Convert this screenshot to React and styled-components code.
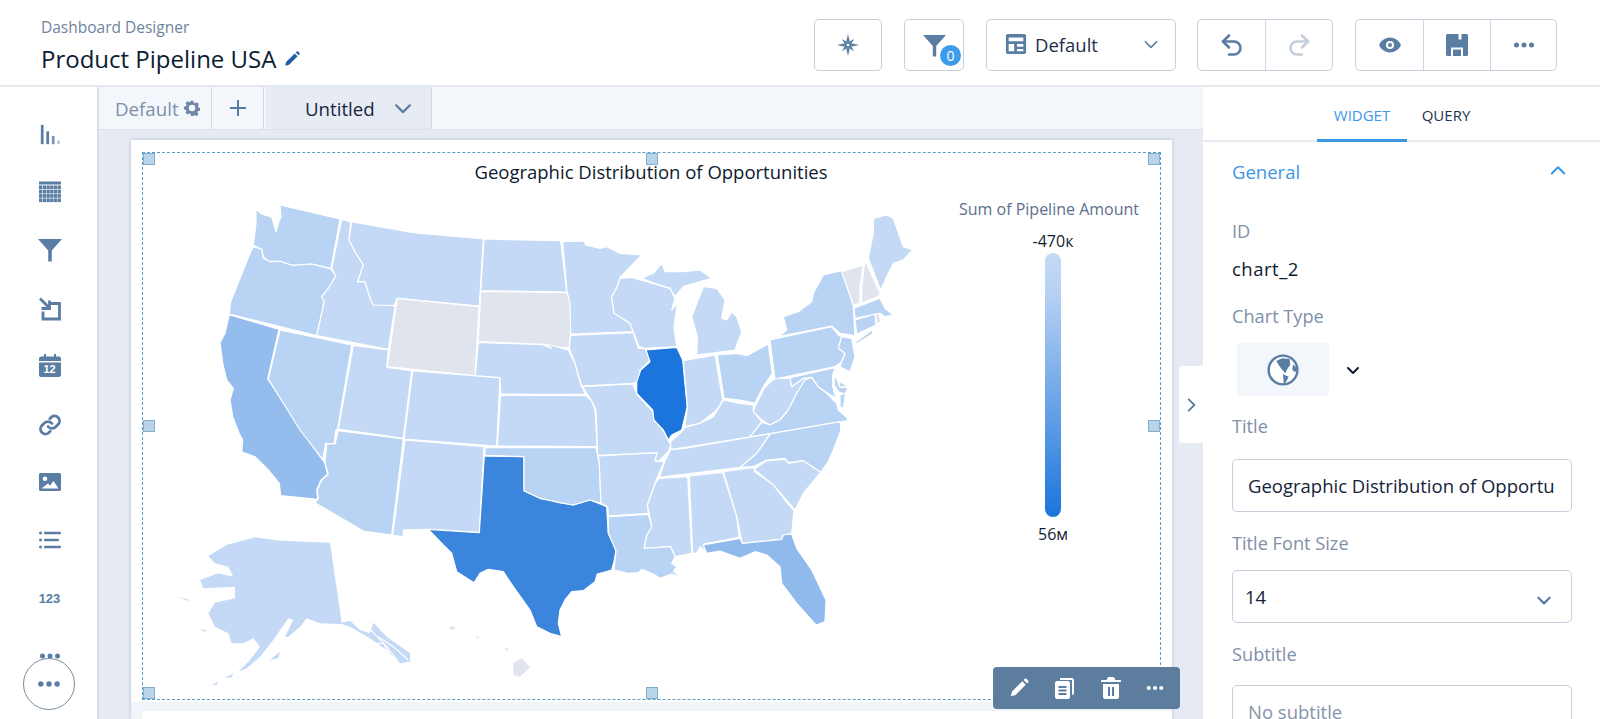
import React from "react";
import styled, { createGlobalStyle } from "styled-components";

const FONT = `"Open Sans", "Noto Sans", "Liberation Sans", sans-serif`;
const ICON = "#5a7da3";

const Global = createGlobalStyle`
  html, body { margin: 0; padding: 0; height: 719px; overflow: hidden; background: #fff; }
  body { font-family: ${FONT}; color: #16325c; }
  * { box-sizing: border-box; }
`;

const ORIGINS = { a: [200, 190], b: [540, 190], c: [160, 430], d: [540, 420] };
const toPoints = (s) => {
  let o = [0, 0];
  return s
    .trim()
    .split(/\s+/)
    .reduce((acc, tok) => {
      if (ORIGINS[tok]) { o = ORIGINS[tok]; return acc; }
      const [x, y] = tok.split(",").map(Number);
      acc.push(`${(o[0] + x / 3).toFixed(1)},${(o[1] + y / 3).toFixed(1)}`);
      return acc;
    }, [])
    .join(" ");
};

const C = { base: "#c3d9f6", mid: "#b8d3f3", ca: "#94bced", fl: "#90b9ec", tx: "#3b86dc", il: "#1b75dc", none: "#e0e4ec" };

const STATES = [
  [C.mid, "a 168,58 185,72 215,82 228,125 235,100 243,80 240,45 420,87 393,235 335,222 275,226 240,214 205,214 190,200 185,178 160,165 162,150 168,100"],
  [C.mid, "a 160,170 185,178 190,205 210,215 240,214 275,226 335,222 393,237 407,258 385,295 365,320 373,335 350,437 88,372 92,335 118,270 150,190"],
  [C.base, "a 425,88 452,95 447,150 465,185 490,225 473,275 495,275 512,330 520,345 575,342 585,350 565,478 350,437 373,335 365,320 385,295 407,258 395,235"],
  [C.base, "a 455,95 640,128 850,147 838,348 592,325 582,347 520,345 512,330 495,275 473,275 490,225 465,185 447,150"],
  [C.none, "a 592,325 837,350 825,557 562,530"],
  [C.base, "a 852,147 1082,152 1100,306 842,302"],
  [C.none, "a 842,304 1100,308 b 92,340 92,430 88,472 58,474 0,463 a 835,455"],
  [C.ca, "a 88,374 237,418 203,567 345,778 c 495,100 503,133 483,150 470,180 473,208 362,197 358,160 325,120 285,80 245,65 248,30 232,0 a 125,750 98,680 90,630 100,595 80,570 68,520 60,458 75,430"],
  [C.mid, "a 240,420 455,465 413,716 c 527,2 522,42 497,40 488,88 420,0 a 205,567"],
  [C.base, "a 460,466 565,480 560,532 635,542 610,745 415,717"],
  [C.base, "a 638,543 900,563 890,768 612,747"],
  [C.mid, "c 535,2 730,27 695,315 610,303 465,218 475,205 472,180 485,150 505,133 495,100 500,42 525,42"],
  [C.base, "c 735,30 972,50 958,308 805,298 730,300 730,320 698,316"],
  [C.tx, "c 973,78 1092,80 1092,182 d 0,235 30,240 60,248 100,255 150,240 175,250 200,260 205,340 218,365 228,392 222,425 215,450 172,462 165,485 130,512 95,515 75,540 60,570 55,610 65,650 30,640 0,625 c 1130,590 1110,540 1060,470 1030,425 985,418 960,430 942,458 890,425 875,370 850,345 805,298 958,308"],
  [C.mid, "c 975,53 d 168,83 178,130 183,250 150,240 100,255 60,248 0,235 c 1092,182 1092,80 975,76"],
  [C.base, "a 902,616 b 138,617 155,632 165,660 172,770 a 892,768"],
  [C.base, "a 835,457 1040,465 1055,475 b 0,462 30,465 60,473 85,480 105,520 120,575 135,612 0,613 a 902,612 900,563 826,557"],
  [C.base, "b 92,436 280,428 295,475 315,475 330,510 300,540 300,570 280,580 125,588 105,520 88,475"],
  [C.base, "b 68,155 133,153 137,165 180,175 200,170 240,190 305,195 240,262 232,290 215,320 222,370 270,400 280,425 92,432 90,340 80,300"],
  [C.base, "b 240,265 275,262 310,272 390,295 405,325 395,360 412,340 402,410 410,470 315,475 297,470 280,425 270,400 222,370 215,320 232,290"],
  [C.base, "b 305,265 340,250 365,220 375,245 430,245 480,240 515,265 430,290 405,320 390,295 340,278"],
  [C.base, "b 455,380 490,290 530,295 555,330 545,385 560,390 575,365 590,380 605,425 585,480 470,495 472,440"],
  [C.il, "b 318,480 410,472 428,510 442,650 430,700 425,720 395,735 385,750 370,720 340,690 338,660 290,610 290,575 302,540 330,515"],
  [C.base, "b 430,512 525,495 548,630 530,660 505,680 480,700 435,710 442,650"],
  [C.mid, "b 532,495 590,490 620,497 685,462 697,550 670,590 645,640 600,630 552,625"],
  [C.base, "b 435,712 480,700 520,680 550,630 600,640 640,645 640,665 665,695 630,741 392,779 392,755 425,725"],
  [C.base, "b 645,650 672,595 697,570 710,565 750,565 755,590 790,565 800,570 770,610 745,660 720,690 690,705 665,690 640,665"],
  [C.mid, "b 630,741 665,697 690,705 720,690 745,660 770,610 795,570 815,562 835,590 860,610 890,640 895,660 918,680 925,692"],
  [C.mid, "b 690,450 875,410 895,435 905,440 895,475 915,490 905,515 885,530 705,567"],
  [C.mid, "b 715,440 740,420 730,380 775,365 815,335 820,310 850,255 905,242 940,345 945,440 935,435 900,430 875,408"],
  [C.mid, "b 945,458 995,420 1000,430 950,462"],
  [C.mid, "b 905,440 935,445 945,500 930,545 900,530 915,490 895,475"],
  [C.mid, "b 750,563 885,533 878,555 878,590 888,625 860,608 835,590 815,562 790,565 755,590"],
  [C.mid, "b 887,535 900,575 925,590 900,592"],
  [C.mid, "b 883,550 900,592 925,592 915,612 895,605 883,585"],
  [C.mid, "b 900,615 917,610 910,655 900,650"],
  [C.none, "b 905,245 970,225 960,290 960,340 940,345"],
  [C.none, "b 975,210 1022,315 965,340 965,290"],
  [C.base, "b 985,205 1000,130 1000,85 1040,75 1060,85 1090,170 1118,180 1090,210 1060,220 1040,260 1022,300"],
  [C.mid, "b 942,355 1020,325 1035,355 1060,375 1035,380 1020,370 945,385"],
  [C.mid, "b 945,390 1005,372 1008,405 950,432"],
  [C.none, "b 1005,372 1018,370 1022,395 1010,403"],
  [C.mid, "d 692,41 900,5 903,30 880,90 865,125 842,157 790,122 745,128 735,115 680,120 640,140 600,142 650,100"],
  [C.base, "d 642,148 680,122 735,118 745,130 790,122 842,157 790,220 765,270 735,235 700,195"],
  [C.base, "d 550,155 640,142 645,155 700,195 735,240 762,272 755,340 730,345 725,358 607,370 590,290"],
  [C.base, "d 448,168 548,157 590,290 598,352 490,372 498,395 480,380 470,400 458,400"],
  [C.base, "d 358,175 443,170 455,400 405,410 392,380 312,385 320,345 335,320 322,255 345,190"],
  [C.base, "d 392,89 435,85 690,41 650,100 600,142 358,172 375,122"],
  [C.base, "d 175,108 352,98 345,122 372,125 345,190 322,255 325,280 205,288 203,260 183,250 178,130"],
  [C.mid, "d 205,290 325,283 335,320 320,345 312,385 392,380 405,410 395,430 410,440 400,455 430,470 395,462 360,475 340,462 305,448 295,458 265,460 222,450 228,392 205,340"],
  [C.base, "b 128,590 278,582 290,612 320,645 338,665 342,690 370,722 392,765 d 385,95 358,122 345,122 352,98 173,106 b 168,660 155,632"],
  [C.fl, "d 490,375 600,355 607,370 725,358 730,345 755,342 770,385 815,450 858,540 855,605 828,615 770,550 725,490 720,440 680,405 645,395 600,415 540,393 500,400"],
];

const ISLANDS = [
  [C.base, "c 145,378 200,345 285,322 360,332 510,338 545,578 570,572 600,600 630,610 640,578 680,620 750,670 750,695 720,700 680,660 630,625 570,590 545,582 480,580 440,565 420,590 385,620 375,620 400,570 385,565 340,630 300,680 260,715 235,725 270,690 300,650 280,625 250,640 215,640 205,610 165,590 145,550 165,518 225,505 225,470 130,475 120,450 175,430 220,440 205,410 165,400"],
  [C.base, "c 155,765 175,755 170,765"],
  [C.base, "c 195,745 220,730 215,742"],
  [C.base, "c 330,690 360,665 355,685"],
  [C.base, "c 120,597 140,600 135,605"],
  [C.base, "c 55,500 88,510 80,512"],
  [C.none, "c 1060,700 1085,685 1110,712 1080,740 1060,735"],
  [C.none, "c 868,590 885,590 883,600 870,598"],
  [C.none, "c 945,618 958,620 955,627"],
  [C.none, "c 1030,652 1050,658 1040,662"],
];
const CUTS = ["c 632,600 680,650 715,695", "c 655,620 700,650 745,690", "c 640,640 670,640 690,672"];

const USMap = () => (
  <MapSvg viewBox="131 140 1041 579">
    {ISLANDS.map(([f, p], i) => <polygon key={i} fill={f} points={toPoints(p)} />)}
    {CUTS.map((p, i) => <polyline key={i} fill="none" stroke="#fff" strokeWidth="1.200" points={toPoints(p)} />)}
    {STATES.map(([f, p], i) => (
      <polygon key={i} fill={f} stroke="#fff" strokeWidth="1.200" strokeLinejoin="round" points={toPoints(p)} />
    ))}
  </MapSvg>
);

/* ---------- icons ---------- */
const Ico = ({ s = 24, vb = "0 0 24 24", c = ICON, children }) => (
  <svg width={s} height={s} viewBox={vb} fill={c}>{children}</svg>
);
const Pencil = ({ s = 18, c = "#1f5fa8" }) => (
  <Ico s={s} c={c}><path d="M3 21l1.400-5.200L15.600 4.600l3.800 3.800L8.200 19.600zM17 3.200l1.300-1.200c.5-.5 1.300-.5 1.800 0l2 2c.5.5.5 1.300 0 1.800L20.800 7z" /></Ico>
);
const Compass = () => (
  <Ico s={22}>
    {[0, 90, 180, 270].map((r) => <path key={r} d="M12 0l2 8.500h-4z" transform={`rotate(${r} 12 12)`} />)}
    {[45, 135, 225, 315].map((r) => <path key={r} d="M12 2.800l1.700 5.700h-3.400z" transform={`rotate(${r} 12 12)`} />)}
    <circle cx="12" cy="12" r="3.600" /><circle cx="12" cy="12" r="1.500" fill="#fff" />
  </Ico>
);
const Funnel = ({ s = 23 }) => (
  <Ico s={s} vb="0 0 23 23"><path d="M0 1h23L13.200 12v10.500h-3.400V12z" /></Ico>
);
const LayoutIcon = () => (
  <Ico s={22}><path fillRule="evenodd" d="M3 1h18c1 0 2 1 2 2v18c0 1-1 2-2 2H3c-1 0-2-1-2-2V3c0-1 1-2 2-2zm1 4v4h16V5zm0 7v8h6v-8zm9 0v3h7v-3zm0 5.500V20h7v-2.500z" /></Ico>
);
const Chev = ({ dir = "down", s = 16, c = ICON, w = 2 }) => {
  const d = { down: "M3 6l5 5 5-5", up: "M3 10l5-5 5 5", right: "M6 3l5 5-5 5" }[dir];
  return <svg width={s} height={s} viewBox="0 0 16 16" fill="none" stroke={c} strokeWidth={w} strokeLinecap="round" strokeLinejoin="round"><path d={d} /></svg>;
};
const Undo = ({ c = ICON, flip }) => (
  <svg width="24" height="24" viewBox="0 0 24 24" fill="none" stroke={c} strokeWidth="2.600" strokeLinecap="round" strokeLinejoin="round" style={flip ? { transform: "scaleX(-1)" } : undefined}>
    <path d="M9 2.500L3 8.500l6 6" /><path d="M3 8.500h11a6.500 6.500 0 0 1 0 13H9" />
  </svg>
);
const Eye = () => (
  <Ico s={24}><path fillRule="evenodd" d="M12 4.500c5.500 0 9.500 4 11 7.500-1.500 3.500-5.500 7.500-11 7.500S2.500 15.500 1 12c1.500-3.500 5.500-7.500 11-7.500zm0 3.500a4 4 0 1 0 0 8 4 4 0 0 0 0-8zm0 2a2 2 0 1 1 0 4 2 2 0 0 1 0-4z" /></Ico>
);
const Save = () => (
  <Ico s={24}><path fillRule="evenodd" d="M2.500 1h19C22.300 1 23 1.700 23 2.500v19c0 .8-.7 1.500-1.500 1.500h-3.500v-8.500H6V23H2.500C1.700 23 1 22.300 1 21.500v-19C1 1.700 1.700 1 2.500 1zM13.500 1v5.500h3V1zM8 16.500h8V23H8z" /></Ico>
);
const Dots = ({ c = ICON, s = 24 }) => (
  <Ico s={s} c={c}><circle cx="4.500" cy="12" r="2.500" /><circle cx="12" cy="12" r="2.500" /><circle cx="19.500" cy="12" r="2.500" /></Ico>
);
const Gear = () => (
  <Ico s={16} c="#6f86a5"><path fillRule="evenodd" d="M10 1h4l.6 3 2.200 1 2.700-1.600 2.800 2.800L20.700 9l1 2.300 2.300.7v4l-3 .6-.9 2.100 1.600 2.700-2.800 2.800-2.700-1.600-2.200.9L13.500 24h-3l-.6-3-2.200-.900-2.700 1.600-2.800-2.800L3.800 17l-.9-2.100L0 14v-4l3-.6.9-2.200L2.300 4.500l2.800-2.800L7.800 3.300 10 2.400zm2 6a5 5 0 1 0 0 10 5 5 0 0 0 0-10z" /></Ico>
);
const BarsIcon = () => (
  <Ico s={22}><rect x="2" y="1" width="3" height="21" /><rect x="8" y="8" width="3" height="14" /><rect x="14" y="13" width="3" height="9" opacity=".8" /><rect x="20" y="18" width="2.500" height="4" opacity=".5" /></Ico>
);
const TableIcon = () => (
  <Ico s={24}>
    <rect x="1" y="1.500" width="22" height="3" />
    {[5.500, 9.800, 14.100, 18.400].map((y) =>
      [1, 4.800, 8.500, 12.200, 15.900, 19.600].map((x) => <rect key={`${x}-${y}`} x={x} y={y} width="3.300" height="3.700" />)
    )}
  </Ico>
);
const ImportIcon = () => (
  <svg width="24" height="24" viewBox="0 0 24 24" fill="none" stroke={ICON} strokeWidth="2.800">
    <path d="M12 6.500h9.500v15.500H5v-7.500" />
    <path d="M2 1.500l9 9" /><path d="M3.500 11.500h8v-8" />
  </svg>
);
const CalIcon = () => (
  <Ico s={24}><path fillRule="evenodd" d="M6 0h2v2.500h8V0h2v2.500h3c1 0 2 1 2 2V7H1V4.500c0-1 1-2 2-2h3zM1 8.500h22V21c0 1-1 2-2 2H3c-1 0-2-1-2-2z" /></Ico>
);
const LinkIcon = () => (
  <svg width="24" height="24" viewBox="0 0 24 24" fill="none" stroke={ICON} strokeWidth="2.800" strokeLinecap="round">
    <path d="M10 13.500a5 5 0 0 0 7.500.5l3-3a5 5 0 0 0-7-7l-1.700 1.700" />
    <path d="M14 10.500a5 5 0 0 0-7.500-.5l-3 3a5 5 0 0 0 7 7l1.700-1.700" />
  </svg>
);
const ImageIcon = () => (
  <Ico s={24}><path fillRule="evenodd" d="M2.500 3h19c.8 0 1.500.7 1.500 1.500v15c0 .8-.7 1.500-1.500 1.500h-19C1.700 21 1 20.300 1 19.500v-15C1 3.700 1.700 3 2.500 3zM7 6.500a2.300 2.300 0 1 0 0 4.600 2.300 2.300 0 0 0 0-4.600zM3.500 18.500h17l-5-7.500-3.500 4.500-2-2z" /></Ico>
);
const ListIcon = () => (
  <Ico s={24}><circle cx="2.500" cy="5" r="1.500" /><circle cx="2.500" cy="12" r="1.500" /><circle cx="2.500" cy="19" r="1.500" /><rect x="6" y="3.800" width="17" height="2.400" rx="1" /><rect x="6" y="10.800" width="15" height="2.400" rx="1" /><rect x="6" y="17.800" width="17" height="2.400" rx="1" /></Ico>
);
const Globe = () => (
  <svg width="32" height="32" viewBox="0 0 32 32">
    <circle cx="16" cy="16" r="14.400" fill="#fff" stroke={ICON} strokeWidth="2.400" />
    <path fill={ICON} d="M9.300 7L15 4.300 22.700 5 23.300 11 20.700 14.300 18.300 19.300 14 14.300 11.700 11zM16 20.300L21.700 22.700 18.300 29.300 16.700 29.300zM26 10.300L30 14.300 28.300 18.300 25.300 16z" />
  </svg>
);
const CopyIcon = () => (
  <Ico s={24} c="#fff"><path fillRule="evenodd" d="M8 2h12c1 0 2 1 2 2v13c0 1-1 2-2 2V4H8c0-1 0-2 0-2z" /><path fillRule="evenodd" d="M5 5h11c1 0 2 1 2 2v14c0 1-1 2-2 2H5c-1 0-2-1-2-2V7c0-1 1-2 2-2zm1.500 5v2h8v-2zm0 3.500v2h8v-2zm0 3.500v2h8v-2z" /></Ico>
);
const TrashIcon = () => (
  <Ico s={24} c="#fff"><path fillRule="evenodd" d="M10 1h4c1 0 2 1 2 2v1h5c.6 0 1 .4 1 1v1H2V5c0-.6.4-1 1-1h5V3c0-1 1-2 2-2zM4 8h16v13c0 1-1 2-2 2H6c-1 0-2-1-2-2zm5 3v9h2v-9zm4 0v9h2v-9z" /></Ico>
);

/* ---------- layout ---------- */
const Page = styled.div`
  width: 1600px; height: 719px; display: flex; flex-direction: column; overflow: hidden; position: relative;
`;
const Header = styled.header`
  height: 87px; flex: none; display: flex; align-items: flex-start; justify-content: space-between;
  border-bottom: 2px solid #e4e9f0; background: #fff;
`;
const Titles = styled.div`padding: 17px 0 0 41px;`;
const Crumb = styled.div`font-size: 15.500px; line-height: 20px; color: #6f83a0;`;
const TitleRow = styled.div`display: flex; align-items: center; gap: 7px; margin-top: 6px;`;
const PageTitle = styled.h1`margin: 0; font-weight: 400; font-size: 24px; line-height: 32px; color: #0c1c33;`;
const Actions = styled.div`display: flex; align-items: center; padding: 19px 43px 0 0;`;
const Group = styled.div`
  display: flex; height: 52px; margin-left: ${(p) => p.$gap ?? 22}px; border: 1px solid #c6d0dd; border-radius: 5px; background: #fff;
`;
const ActionBtn = styled.div`
  width: ${(p) => p.$w}px; display: flex; align-items: center; justify-content: center; position: relative;
  & + & { border-left: 1px solid #d0d7e2; }
`;
const Badge = styled.span`
  position: absolute; right: 2px; bottom: 4px; width: 21px; height: 21px; border-radius: 50%;
  background: #3d9be9; color: #fff; font-size: 14px; line-height: 21px; text-align: center;
`;
const LayoutSelect = styled.div`
  width: 188px; display: flex; align-items: center; padding: 0 15px 2px 18px; gap: 8px; font-size: 18.500px; color: #1d2f4c;
  & > span { flex: 1; }
`;
const Body = styled.div`flex: 1; display: flex; min-height: 0;`;
const Rail = styled.nav`
  width: 99px; flex: none; border-right: 2px solid #d8deea; background: #fff; position: relative;
  display: flex; flex-direction: column; align-items: center; padding: 35px 0 0 2px;
`;
const RailItem = styled.div`
  height: 58px; width: 100%; display: flex; justify-content: center; align-items: flex-start; color: ${ICON};
  position: relative; top: ${(p) => p.$dy ?? 0}px;
`;
const Digits = styled.span`font-family: "Liberation Sans", sans-serif; font-weight: 700; font-size: 13px; line-height: 22px; color: ${ICON};`;
const CalDigits = styled.span`
  position: absolute; top: 9px; left: 0; right: 0; text-align: center; font-family: "Liberation Sans", sans-serif;
  font-weight: 700; font-size: 11px; line-height: 13px; color: #fff;
`;
const MoreCircle = styled.div`
  position: absolute; left: 23px; top: 571px; width: 52px; height: 52px; border-radius: 50%;
  background: #fff; border: 1.500px solid #7b8ca5; display: flex; align-items: center; justify-content: center;
`;
const Canvas = styled.main`
  width: 1104px; flex: none; background: #e6ebf3; display: flex; flex-direction: column; position: relative; overflow: hidden;
`;
const TabBar = styled.div`
  height: 43px; flex: none; background: #f3f6fb; display: flex; border-bottom: 1px solid #dde3ec;
`;
const Tab = styled.div`
  display: flex; align-items: center; justify-content: ${(p) => (p.$pl != null ? "flex-start" : "center")};
  padding-left: ${(p) => p.$pl ?? 0}px; gap: ${(p) => p.$gap ?? 0}px;
  width: ${(p) => p.$w}px; background: ${(p) => (p.$active ? "#e7ecf4" : "#f3f6fb")};
  border-right: 1px solid #cfd7e3; font-size: 18.700px; color: ${(p) => p.$c};
  margin-right: ${(p) => p.$mr ?? 0}px;
`;
const Sheet = styled.div`
  margin: 10px 0 0 32px; width: 1041px; flex: 1; background: #fff; position: relative;
  box-shadow: 0 0 4px rgba(84, 105, 141, .35);
`;
const NextWidget = styled.div`
  position: absolute; left: 0; right: 0; top: 562px; bottom: 0; background: #f1f4f8; padding: 9px 0 0 11px;
  &::after { content: ""; display: block; height: 20px; background: #fff; }
`;
const MapSvg = styled.svg`position: absolute; left: 0; top: 0; width: 1041px; height: 579px; display: block;`;
const Selection = styled.div`
  position: absolute; left: 11px; top: 12px; width: 1019px; height: 548px; border: 1.500px dashed #5a9cc8;
`;
const Handle = styled.span`
  position: absolute; width: 12px; height: 12px; background: #b9d4e8; border: 1px solid #7fb0d2;
  left: ${(p) => p.$x}; top: ${(p) => p.$y};
  transform: translate(${(p) => p.$tx}, ${(p) => p.$ty});
`;
const ChartTitle = styled.div`
  position: absolute; left: 0; right: 1px; top: 19px; text-align: center; font-size: 18.500px; line-height: 26px; color: #0d1a2e;
`;
const Legend = styled.div`
  position: absolute; left: 826px; top: 59px; width: 184px; display: flex; flex-direction: column; align-items: center;
`;
const LegendTitle = styled.div`font-size: 16px; line-height: 20px; color: #5d6f8a; white-space: nowrap;`;
const LegendVal = styled.div`font-size: 16px; line-height: 20px; color: #101c30; margin: 12px 0 2px 8px;`;
const LegendBar = styled.div`
  width: 16px; height: 264px; margin-left: 8px; border-radius: 8px; background: linear-gradient(#c5daf6, #b7d1f3 15%, #1b75dc);
`;
const LegendValEnd = styled(LegendVal)`margin: 7px 0 0 8px;`;
const WidgetBar = styled.div`
  position: absolute; left: 862px; top: 527px; width: 187px; height: 42px; border-radius: 4px; background: #5d7d9f;
  display: flex; align-items: center; justify-content: space-around; padding: 0 4px;
`;
const Collapse = styled.div`
  position: absolute; right: 0; top: 279px; width: 24px; height: 77px; background: #fff; border-radius: 3px 0 0 3px;
  display: flex; align-items: center; justify-content: center;
`;
const Panel = styled.aside`flex: 1; background: #fff; display: flex; flex-direction: column; min-width: 0;`;
const PanelTabs = styled.div`
  height: 55px; flex: none; border-bottom: 2px solid #e8ecf2; display: flex; justify-content: flex-start; padding-left: 114px;
`;
const PanelTab = styled.div`
  width: ${(p) => p.$w}px; text-align: center; font-size: 15px; font-weight: 500; line-height: 56px; height: 55px;
  color: ${(p) => (p.$active ? "#3b97e4" : "#20344f")};
  border-bottom: 3px solid ${(p) => (p.$active ? "#3b97e4" : "transparent")};
`;
const Form = styled.div`padding: 0 28px 0 29px; position: relative;`;
const Section = styled.div`
  height: 58px; display: flex; align-items: center; justify-content: space-between; font-size: 18.500px; color: #3b97e4; padding: 0 4px 0 0;
`;
const Label = styled.div`
  font-size: 18.200px; line-height: 24px; color: #7f90a8; margin-top: ${(p) => p.$mt ?? 0}px;
`;
const Value = styled.div`font-size: 18.500px; letter-spacing: .5px; line-height: 24px; color: #0e1a2c; margin-top: 14px;`;
const TypeRow = styled.div`display: flex; align-items: center; gap: 16px; margin: 15px 0 0 5px;`;
const TypeBox = styled.div`
  width: 92px; height: 53px; background: #f3f6fa; border-radius: 3px; display: flex; align-items: center; justify-content: center;
`;
const Input = styled.div`
  height: 53px; margin-top: ${(p) => p.$mt ?? 0}px; border: 1px solid #c6d0dd; border-radius: 5px; padding: 0 15px; font-size: 18.500px; line-height: 51px;
  color: ${(p) => p.$c ?? "#14233a"}; white-space: nowrap; overflow: hidden; position: relative;
`;
const SelectBox = styled(Input)`padding-left: 12px;`;
const SelectChev = styled.span`position: absolute; right: 18px; top: 20px; display: flex;`;

const RAIL = [<BarsIcon />, <TableIcon />, <Funnel s={24} />, <ImportIcon />, "cal", <LinkIcon />, <ImageIcon />, <ListIcon />, "123", "next"];
const RAIL_DY = [2, 0, 0, 1, 0, 1, 0, 0, 2, 0];

export default function App() {
  return (
    <Page>
      <Global />
      <Header>
        <Titles>
          <Crumb>Dashboard Designer</Crumb>
          <TitleRow><PageTitle>Product Pipeline USA</PageTitle><Pencil /></TitleRow>
        </Titles>
        <Actions>
          <Group $gap={0}><ActionBtn $w={66}><Compass /></ActionBtn></Group>
          <Group><ActionBtn $w={58}><Funnel /><Badge>0</Badge></ActionBtn></Group>
          <Group><LayoutSelect><LayoutIcon /><span>Default</span><Chev c={ICON} s={18} w={1.500} /></LayoutSelect></Group>
          <Group $gap={21}>
            <ActionBtn $w={67}><Undo /></ActionBtn>
            <ActionBtn $w={67}><Undo c="#c3ced9" flip /></ActionBtn>
          </Group>
          <Group>
            <ActionBtn $w={67}><Eye /></ActionBtn>
            <ActionBtn $w={67}><Save /></ActionBtn>
            <ActionBtn $w={66}><Dots /></ActionBtn>
          </Group>
        </Actions>
      </Header>
      <Body>
        <Rail>
          {RAIL.map((it, i) => (
            <RailItem key={i} $dy={RAIL_DY[i]}>
              {it === "123" ? <Digits>123</Digits>
                : it === "cal" ? <><CalIcon /><CalDigits>12</CalDigits></>
                : it === "next" ? <Dots />
                : it}
            </RailItem>
          ))}
          <MoreCircle><Dots s={26} /></MoreCircle>
        </Rail>
        <Canvas>
          <TabBar>
            <Tab $w={113} $c="#7d90aa" $gap={5} $pl={16}>Default <Gear /></Tab>
            <Tab $w={52} $c={ICON} $mr={2}>
              <svg width="18" height="18" viewBox="0 0 18 18" stroke={ICON} strokeWidth="2"><path d="M9 1v16M1 9h16" /></svg>
            </Tab>
            <Tab $w={166} $active $c="#17263d" $gap={17} $pl={39}>Untitled <Chev s={22} c={ICON} w={1.600} /></Tab>
          </TabBar>
          <Sheet>
            <NextWidget />
            <USMap />
            <ChartTitle>Geographic Distribution of Opportunities</ChartTitle>
            <Legend>
              <LegendTitle>Sum of Pipeline Amount</LegendTitle>
              <LegendVal>-470к</LegendVal>
              <LegendBar />
              <LegendValEnd>56м</LegendValEnd>
            </Legend>
            <Selection>
              <Handle $x="0" $y="0" $tx="0" $ty="0" />
              <Handle $x="50%" $y="0" $tx="-50%" $ty="0" />
              <Handle $x="100%" $y="0" $tx="-100%" $ty="0" />
              <Handle $x="0" $y="50%" $tx="0" $ty="-50%" />
              <Handle $x="100%" $y="50%" $tx="-100%" $ty="-50%" />
              <Handle $x="0" $y="100%" $tx="0" $ty="-100%" />
              <Handle $x="50%" $y="100%" $tx="-50%" $ty="-100%" />
            </Selection>
            <WidgetBar>
              <Pencil s={22} c="#fff" />
              <CopyIcon />
              <TrashIcon />
              <Dots c="#fff" s={20} />
            </WidgetBar>
          </Sheet>
          <Collapse><Chev dir="right" s={18} c={ICON} w={1.600} /></Collapse>
        </Canvas>
        <Panel>
          <PanelTabs>
            <PanelTab $active $w={90}>WIDGET</PanelTab>
            <PanelTab $w={78}>QUERY</PanelTab>
          </PanelTabs>
          <Form>
            <Section>General <Chev dir="up" s={20} c="#3b97e4" w={1.600} /></Section>
            <Label $mt={19}>ID</Label>
            <Value>chart_2</Value>
            <Label $mt={23}>Chart Type</Label>
            <TypeRow><TypeBox><Globe /></TypeBox><Chev s={16} c="#101c30" /></TypeRow>
            <Label $mt={18}>Title</Label>
            <Input $mt={21}>Geographic Distribution of Opportu</Input>
            <Label $mt={19}>Title Font Size</Label>
            <SelectBox $mt={15}>14<SelectChev><Chev s={18} c={ICON} /></SelectChev></SelectBox>
            <Label $mt={19}>Subtitle</Label>
            <Input $mt={19} $c="#8494aa">No subtitle</Input>
          </Form>
        </Panel>
      </Body>
    </Page>
  );
}
